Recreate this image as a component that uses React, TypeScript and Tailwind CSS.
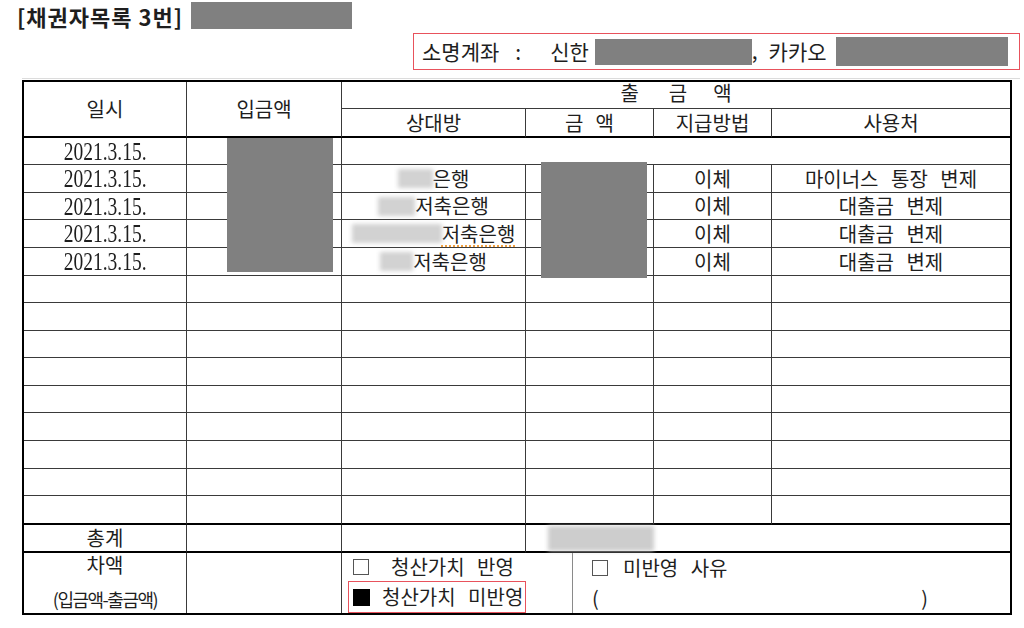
import React from "react";

const C = "flex items-center justify-center border-r border-b border-[#3a3a3a] text-[20px] leading-none [word-spacing:8px]";
const CL = "flex items-center justify-center border-b border-[#3a3a3a] text-[20px] leading-none [word-spacing:8px]";
const CT = "flex items-center justify-center border-r border-b-2 border-[#3a3a3a] border-b-black text-[20px] leading-none [word-spacing:8px]";
const CTL = "flex items-center justify-center border-b-2 border-[#3a3a3a] border-b-black text-[20px] leading-none [word-spacing:8px]";

type Row = { blur: number; name: string; usage: string; underline?: boolean };

const rows: Row[] = [
  { blur: 35, name: "은행", usage: "마이너스 통장 변제" },
  { blur: 37, name: "저축은행", usage: "대출금 변제" },
  { blur: 90, name: "저축은행", usage: "대출금 변제", underline: true },
  { blur: 33, name: "저축은행", usage: "대출금 변제" },
];

function DateText() {
  return (
    <span className="inline-block font-['Liberation_Serif',serif] text-[25px] leading-none scale-x-[0.78]">
      2021.3.15.
    </span>
  );
}

export default function App() {
  const empty = Array.from({ length: 9 }, (_, i) => i);
  return (
    <div className="w-[1024px] h-[628px] bg-white text-[#1e1e1e] font-['Noto_Sans_CJK_KR',sans-serif] overflow-hidden">
      {/* title */}
      <div className="flex items-center h-[27px] mt-[2px] pl-[17px]">
        <span className="text-[22px] font-semibold leading-none tracking-[1px]">[채권자목록 3번]</span>
        <div className="ml-[8px] w-[161px] h-[27px] bg-[#808080]" />
      </div>

      {/* account box */}
      <div className="mt-[4px] ml-[413px] w-[607px] h-[37px] border border-[#e8525c] flex items-center pl-[8px] text-[21px] leading-none">
        <span>소명계좌</span>
        <span className="ml-[16px]">:</span>
        <span className="ml-[29px]">신한</span>
        <div className="ml-[6px] w-[157px] h-[26px] bg-[#808080]" />
        <span className="self-end mb-[8px]">,</span>
        <span className="ml-[11px]">카카오</span>
        <div className="ml-[9px] w-[172px] h-[29px] bg-[#808080]" />
      </div>

      <div className="mt-[8px] ml-[22px] w-[998px] h-px bg-[#dcdcdc]" />

      {/* table */}
      <div className="relative mt-px ml-[22px] w-[990px] border-2 border-black">
        <div className="grid grid-cols-[163px_155px_184px_128px_118px_238px] grid-rows-[27px_29px_27px_28px_27px_28px_28px_27px_28px_27px_28px_27px_28px_28px_27px_29px_28px]">
          {/* header */}
          <div className={`${CT} row-span-2`}>일시</div>
          <div className={`${CT} row-span-2`}>입금액</div>
          <div className={`${CL} col-span-4 pb-[4px]`}>
            <span>출</span>
            <span className="ml-[30px]">금</span>
            <span className="ml-[26px]">액</span>
          </div>
          <div className={CT}>상대방</div>
          <div className={CT}>
            <span>금</span>
            <span className="ml-[12px]">액</span>
          </div>
          <div className={CT}>지급방법</div>
          <div className={CTL}>사용처</div>

          {/* data row 1 */}
          <div className={C}>
            <DateText />
          </div>
          <div className={C} />
          <div className={`${CL} col-span-4`} />

          {rows.map((r, i) => (
            <React.Fragment key={i}>
              <div className={C}>
                <DateText />
              </div>
              <div className={C} />
              <div className={C}>
                <span
                  className="inline-block h-[19px] bg-[#d2d2d2] blur-[2px]"
                  style={{ width: r.blur }}
                />
                <span
                  className={
                    r.underline
                      ? "underline decoration-dotted decoration-[#f0a040] decoration-2 underline-offset-[4px]"
                      : ""
                  }
                >
                  {r.name}
                </span>
              </div>
              <div className={C} />
              <div className={C}>이체</div>
              <div className={CL}>{r.usage}</div>
            </React.Fragment>
          ))}

          {empty.map((i) =>
            i < 8 ? (
              <React.Fragment key={`e${i}`}>
                <div className={C} />
                <div className={C} />
                <div className={C} />
                <div className={C} />
                <div className={C} />
                <div className={CL} />
              </React.Fragment>
            ) : (
              <React.Fragment key={`e${i}`}>
                <div className={CT} />
                <div className={CT} />
                <div className={CT} />
                <div className={CT} />
                <div className={CT} />
                <div className={CTL} />
              </React.Fragment>
            )
          )}

          {/* total row */}
          <div className={CT}>총계</div>
          <div className={CT} />
          <div className={CT} />
          <div className={`${CTL} col-span-3 justify-start`}>
            <span className="ml-[22px] w-[106px] h-[25px] bg-[#cdcdcd] blur-[2px]" />
          </div>
        </div>

        {/* difference row */}
        <div className="flex h-[60px] text-[20px] leading-none [word-spacing:8px]">
          <div className="w-[163px] border-r border-[#3a3a3a] flex flex-col items-center">
            <span className="h-[24px] flex items-center">차액</span>
            <span className="mt-[10px] h-[24px] flex items-center text-[18px] tracking-[-1.5px] [word-spacing:0px]">(입금액-출금액)</span>
          </div>
          <div className="w-[155px] border-r border-[#3a3a3a]" />
          <div className="w-[231px] border-r border-[#8a8a8a] pl-[6px] flex flex-col">
            <div className="h-[30px] flex items-center pl-[5px]">
              <span className="w-[16px] h-[16px] border border-[#555] bg-white" />
              <span className="ml-[22px]">청산가치 반영</span>
            </div>
            <div className="relative z-10 h-[34px] w-[178px] border border-[#e8525c] flex items-center pl-[4px]">
              <span className="w-[17px] h-[17px] bg-black" />
              <span className="ml-[12px]">청산가치 미반영</span>
            </div>
          </div>
          <div className="flex-1 flex flex-col pl-[19px]">
            <div className="h-[30px] flex items-center">
              <span className="w-[16px] h-[16px] border border-[#555] bg-white" />
              <span className="ml-[15px]">미반영 사유</span>
            </div>
            <div className="h-[30px] w-[336px] flex items-center justify-between">
              <span>(</span>
              <span>)</span>
            </div>
          </div>
        </div>

        {/* redaction overlays */}
        <div className="absolute left-[203px] top-[56px] w-[106px] h-[134px] bg-[#808080]" />
        <div className="absolute left-[517px] top-[80px] w-[106px] h-[116px] bg-[#808080]" />
      </div>
    </div>
  );
}
